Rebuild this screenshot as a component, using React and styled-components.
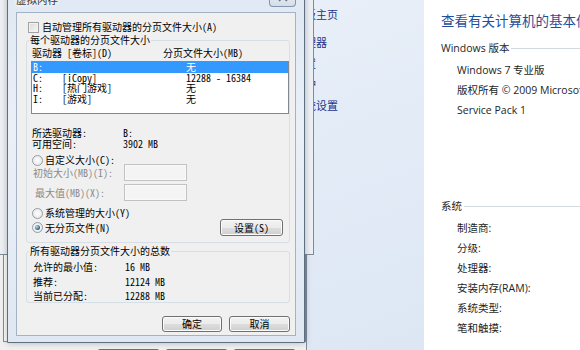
import React from 'react';
import styled, { createGlobalStyle } from 'styled-components';

const GlobalStyle = createGlobalStyle`
  html, body { margin: 0; padding: 0; width: 580px; height: 350px; overflow: hidden; background: #fff; }
  #root { width: 580px; height: 350px; }
  * { box-sizing: border-box; }
`;

const CJK = `"Noto Sans CJK SC", sans-serif`;
const DLG = `"Noto Sans Mono CJK SC", "Noto Sans CJK SC", monospace`;

const Desktop = styled.div`
  position: relative;
  width: 580px;
  height: 350px;
  overflow: hidden;
  display: flex;
`;

/* ---------- control panel background ---------- */
const NavPane = styled.nav`
  width: 424px;
  flex: none;
  padding: 7px 0 0 272px;
  background: linear-gradient(160deg, #eef3fa 0%, #e4ecf7 45%, #dde7f4 100%);
  font-family: ${CJK};
  font-size: 11px;
  color: #1e3287;
  display: flex;
  flex-direction: column;
  white-space: nowrap;
`;
const NavHome = styled.div`
  height: 14px;
  line-height: 14px;
  margin-bottom: 11px;
`;
const NavLink = styled.div`
  height: 21px;
  line-height: 21px;
`;

const Content = styled.main`
  flex: 1;
  min-width: 0;
  background: #fff;
  padding: 11px 0 0 17px;
  overflow: hidden;
  font-family: "Open Sans", "Noto Sans CJK SC", sans-serif;
  font-size: 10.5px;
  color: #1e1e1e;
  white-space: nowrap;
`;
const PageTitle = styled.h1`
  margin: 0;
  font-weight: normal;
  font-family: ${CJK};
  font-size: 13.5px;
  line-height: 18px;
  color: #1f4f9c;
`;
const SectionHead = styled.div`
  display: flex;
  align-items: center;
  height: 14px;
  margin-top: ${p => p.$gap}px;
  &::after {
    content: "";
    flex: 1;
    height: 1px;
    background: #d3d9e1;
    margin: 3px 0 0 2px;
  }
`;
const InfoList = styled.div`
  margin-top: 6px;
  display: flex;
  flex-direction: column;
`;
const InfoLine = styled.div`
  height: 20px;
  line-height: 20px;
  padding-left: 16px;
`;

/* ---------- windows behind ---------- */
const BackWindow = styled.div`
  position: absolute;
  left: -10px;
  top: -20px;
  width: ${p => p.$w}px;
  height: ${p => p.$h}px;
  background: ${p => p.$bg};
  border: 1px solid #7f8b99;
  display: flex;
  flex-direction: column;
  padding: 0 0 0 12px;
`;
const TabPage = styled.div`
  flex: 1;
  margin-top: 40px;
  border: 1px solid #898c95;
  background: #fbfbfb;
`;
const BackButtons = styled.div`
  display: flex;
  gap: 5px;
  padding: 7px 0 4px 94px;
`;

/* ---------- virtual memory dialog ---------- */
const Dialog = styled.section`
  position: absolute;
  left: 7px;
  top: -12px;
  width: 298px;
  height: 355px;
  border: 1px solid #5f6f82;
  border-radius: 6px 6px 0 0;
  background: linear-gradient(180deg, #dfe8f3 0%, #eaf0f8 40%, #dfe8f2 100%);
  display: flex;
  flex-direction: column;
  padding: 0 8px 6px 8px;
  box-shadow: 0 0 6px rgba(0, 0, 0, 0.25);
  font-family: ${DLG};
  font-size: 10px;
  color: #000;
`;
const TitleBar = styled.div`
  height: 23px;
  flex: none;
  display: flex;
  justify-content: space-between;
  align-items: flex-start;
`;
const Title = styled.div`
  margin-top: 5px;
  font-family: ${CJK};
  font-size: 10.5px;
  line-height: 12px;
  color: #3a3a3a;
  text-shadow: 0 0 5px #fff, 0 0 5px #fff;
`;
const CloseBtn = styled.div`
  width: 27px;
  height: 18px;
  border: 1px solid #8595aa;
  border-top: none;
  border-radius: 0 0 4px 4px;
  background: linear-gradient(180deg, #f4f7fb 0%, #e3e9f1 50%, #d3dce8 100%);
  display: flex;
  align-items: center;
  justify-content: center;
`;
const Client = styled.div`
  flex: 1;
  background: #f0f0f0;
  border: 1px solid #a3b2c5;
  padding: 8px 5px 0 9px;
  display: flex;
  flex-direction: column;
`;
const CheckRow = styled.label`
  height: 12px;
  display: flex;
  align-items: center;
  gap: 3px;
  padding-left: 2px;
  line-height: 12px;
  white-space: nowrap;
`;
const CheckBox = styled.span`
  width: 11px;
  height: 11px;
  flex: none;
  border: 1px solid #a2a2a2;
  background: linear-gradient(135deg, #d9d9d9, #f8f8f8);
  box-shadow: inset 0 0 0 1px #f2f2f2;
`;
const Group = styled.fieldset`
  margin: ${p => p.$top}px 0 0 0;
  min-width: 0;
  border: 1px solid #d5dfe5;
  border-radius: 3px;
  padding: 0 0 ${p => p.$bottom}px 4px;
  display: flex;
  flex-direction: column;
`;
const Legend = styled.legend`
  padding: 0 1px;
  margin-left: -2px;
  line-height: 12px;
  white-space: nowrap;
`;
const ColHeader = styled.div`
  margin-top: 2px;
  height: 10px;
  line-height: 10px;
  display: grid;
  grid-template-columns: 131px 1fr;
  padding-left: 1px;
  white-space: nowrap;
`;
const ListBox = styled.div`
  margin-top: 3px;
  height: 53px;
  border: 1px solid #828790;
  background: #fff;
  display: flex;
  flex-direction: column;
`;
const ListRow = styled.div`
  height: 10.5px;
  line-height: 10.5px;
  display: grid;
  grid-template-columns: 29px 124px 1fr;
  padding-left: 1px;
  white-space: nowrap;
  background: ${p => (p.$sel ? '#3399ff' : 'transparent')};
  color: ${p => (p.$sel ? '#fff' : '#000')};
`;
const InfoRow = styled.div`
  margin-top: ${p => p.$top || 0}px;
  height: ${p => p.$h || 11}px;
  line-height: ${p => p.$h || 11}px;
  display: grid;
  grid-template-columns: ${p => p.$col}px 1fr;
  padding-left: ${p => p.$indent}px;
  white-space: nowrap;
`;
const RadioRow = styled.div`
  margin-top: ${p => p.$top || 0}px;
  height: ${p => p.$h || 12}px;
  display: flex;
  align-items: center;
  justify-content: space-between;
`;
const RadioLabel = styled.label`
  display: flex;
  align-items: center;
  gap: 2px;
  padding-left: 1px;
  white-space: nowrap;
  line-height: 12px;
`;
const RadioDot = styled.span`
  width: 11px;
  height: 11px;
  flex: none;
  border-radius: 50%;
  border: 1px solid #939ca6;
  background: radial-gradient(circle at 50% 50%, #ffffff 0%, #e2e2e2 100%);
  display: flex;
  align-items: center;
  justify-content: center;
  &::after {
    content: "";
    width: 5px;
    height: 5px;
    border-radius: 50%;
    background: radial-gradient(circle at 35% 35%, #b8dbe9 0%, #2a5876 75%);
    display: ${p => (p.$checked ? 'block' : 'none')};
  }
`;
const FieldRow = styled.div`
  margin-top: ${p => p.$top}px;
  height: 17px;
  display: grid;
  grid-template-columns: ${p => p.$col}px 63px;
  align-items: center;
  padding-left: ${p => p.$indent}px;
  color: #8a8a8a;
  white-space: nowrap;
`;
const TextField = styled.div`
  height: 17px;
  border: 1px solid #c2c2c2;
  background: #f4f4f4;
  box-shadow: inset 0 0 0 1px #f9f9f9;
`;
const PushButton = styled.button`
  width: ${p => p.$w}px;
  height: ${p => p.$h || 16}px;
  margin-right: ${p => p.$right || 0}px;
  padding: 0;
  border: 1px solid #707070;
  border-radius: 3px;
  background: linear-gradient(#f2f2f2 0%, #ebebeb 50%, #dddddd 51%, #cfcfcf 100%);
  box-shadow: inset 0 0 0 1px #fbfbfb;
  font-family: ${DLG};
  font-size: 10px;
  line-height: 12px;
  color: #000;
  flex: none;
`;
const TotalRows = styled.div`
  margin-top: 4px;
  display: flex;
  flex-direction: column;
  gap: 2.5px;
`;
const ButtonBar = styled.div`
  margin-top: 13px;
  display: flex;
  justify-content: flex-end;
  gap: 7px;
`;

const drives = [
  { d: 'B:', l: '', s: '无', sel: true },
  { d: 'C:', l: '[iCopy]', s: '12288 - 16384' },
  { d: 'H:', l: '[热门游戏]', s: '无' },
  { d: 'I:', l: '[游戏]', s: '无' },
];

const totals = [
  ['允许的最小值:', '16 MB'],
  ['推荐:', '12124 MB'],
  ['当前已分配:', '12288 MB'],
];

export default function App() {
  return (
    <>
      <GlobalStyle />
      <Desktop>
        <NavPane>
          <NavHome>控制面板主页</NavHome>
          <NavLink>设备管理器</NavLink>
          <NavLink>远程设置</NavLink>
          <NavLink>系统保护</NavLink>
          <NavLink>高级系统设置</NavLink>
        </NavPane>
        <Content>
          <PageTitle>查看有关计算机的基本信息</PageTitle>
          <SectionHead $gap={11}>Windows 版本</SectionHead>
          <InfoList>
            <InfoLine>Windows 7 专业版</InfoLine>
            <InfoLine>版权所有 © 2009 Microsoft Corporation。保留所有权利。</InfoLine>
            <InfoLine>Service Pack 1</InfoLine>
          </InfoList>
          <SectionHead $gap={78}>系统</SectionHead>
          <InfoList>
            <InfoLine>制造商:</InfoLine>
            <InfoLine>分级:</InfoLine>
            <InfoLine>处理器:</InfoLine>
            <InfoLine>安装内存(RAM):</InfoLine>
            <InfoLine>系统类型:</InfoLine>
            <InfoLine>笔和触摸:</InfoLine>
          </InfoList>
        </Content>

        <BackWindow $w={317} $h={390} $bg="#f0f0f0">
          <TabPage />
          <BackButtons>
            <PushButton $w={63}>确定</PushButton>
            <PushButton $w={63}>取消</PushButton>
            <PushButton $w={63}>应用(A)</PushButton>
          </BackButtons>
        </BackWindow>
        <BackWindow $w={324} $h={275} $bg="#eceff3" />

        <Dialog>
          <TitleBar>
            <Title>虚拟内存</Title>
            <CloseBtn>
              <svg width="10" height="9" viewBox="0 0 10 9">
                <path d="M1 1 L9 8 M9 1 L1 8" stroke="#6d7785" strokeWidth="1.6" />
              </svg>
            </CloseBtn>
          </TitleBar>
          <Client>
            <CheckRow>
              <CheckBox />
              自动管理所有驱动器的分页文件大小(A)
            </CheckRow>
            <Group $top={1} $bottom={6}>
              <Legend>每个驱动器的分页文件大小</Legend>
              <ColHeader>
                <span>驱动器 [卷标](D)</span>
                <span>分页文件大小(MB)</span>
              </ColHeader>
              <ListBox>
                {drives.map(r => (
                  <ListRow key={r.d} $sel={r.sel}>
                    <span>{r.d}</span>
                    <span>{r.l}</span>
                    <span>{r.s}</span>
                  </ListRow>
                ))}
              </ListBox>
              <InfoRow $top={13} $col={91} $indent={1}>
                <span>所选驱动器:</span>
                <span>B:</span>
              </InfoRow>
              <InfoRow $col={91} $indent={1}>
                <span>可用空间:</span>
                <span>3902 MB</span>
              </InfoRow>
              <RadioRow $top={5}>
                <RadioLabel>
                  <RadioDot />
                  自定义大小(C):
                </RadioLabel>
              </RadioRow>
              <FieldRow $top={-2} $col={91} $indent={2}>
                <span>初始大小(MB)(I):</span>
                <TextField />
              </FieldRow>
              <FieldRow $top={3} $col={89} $indent={4}>
                <span>最大值(MB)(X):</span>
                <TextField />
              </FieldRow>
              <RadioRow $top={6}>
                <RadioLabel>
                  <RadioDot />
                  系统管理的大小(Y)
                </RadioLabel>
              </RadioRow>
              <RadioRow $h={17}>
                <RadioLabel>
                  <RadioDot $checked />
                  无分页文件(N)
                </RadioLabel>
                <PushButton $w={63} $h={17} $right={6}>设置(S)</PushButton>
              </RadioRow>
            </Group>
            <Group $top={2} $bottom={0}>
              <Legend>所有驱动器分页文件大小的总数</Legend>
              <TotalRows>
                {totals.map(([k, v]) => (
                  <InfoRow key={k} $h={12} $col={92} $indent={2}>
                    <span>{k}</span>
                    <span>{v}</span>
                  </InfoRow>
                ))}
              </TotalRows>
            </Group>
            <ButtonBar>
              <PushButton $w={60}>确定</PushButton>
              <PushButton $w={61}>取消</PushButton>
            </ButtonBar>
          </Client>
        </Dialog>
      </Desktop>
    </>
  );
}
